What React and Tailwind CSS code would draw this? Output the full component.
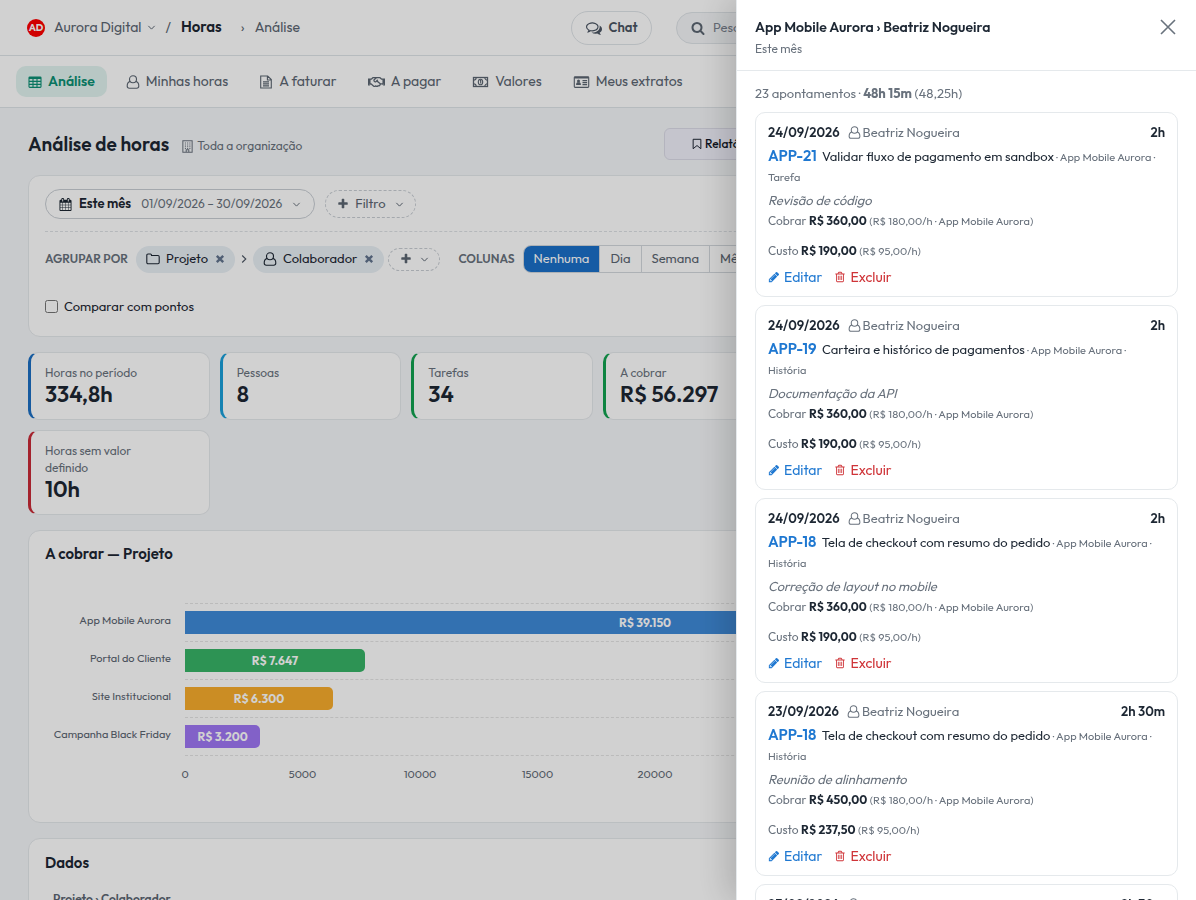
import React, { useState } from 'react';
import { FaRegHandshake } from 'react-icons/fa';

const SOLID_PATHS = {
  plus: 'M1600 736v192q0 40-28 68t-68 28h-416v416q0 40-28 68t-68 28h-192q-40 0-68-28t-28-68v-416h-416q-40 0-68-28t-28-68v-192q0-40 28-68t68-28h416v-416q0-40 28-68t68-28h192q40 0 68 28t28 68v416h416q40 0 68 28t28 68z',
  trash: 'M704 736v576q0 14-9 23t-23 9h-64q-14 0-23-9t-9-23v-576q0-14 9-23t23-9h64q14 0 23 9t9 23zm256 0v576q0 14-9 23t-23 9h-64q-14 0-23-9t-9-23v-576q0-14 9-23t23-9h64q14 0 23 9t9 23zm256 0v576q0 14-9 23t-23 9h-64q-14 0-23-9t-9-23v-576q0-14 9-23t23-9h64q14 0 23 9t9 23zm128 724v-948h-896v948q0 22 7 40.5t14.5 27 10.5 8.5h832q3 0 10.5-8.5t14.5-27 7-40.5zm-672-1076h448l-48-117q-7-9-17-11h-317q-10 2-17 11zm928 32v64q0 14-9 23t-23 9h-96v948q0 83-47 143.5t-113 60.5h-832q-66 0-113-58.5t-47-141.5v-952h-96q-14 0-23-9t-9-23v-64q0-14 9-23t23-9h309l70-167q15-37 54-63t79-26h320q40 0 79 26t54 63l70 167h309q14 0 23 9t9 23z',
  pencil: 'M491 1536l91-91-235-235-91 91v107h128v128h107zm523-928q0-22-22-22-10 0-17 7l-542 542q-7 7-7 17 0 22 22 22 10 0 17-7l542-542q7-7 7-17zm-54-192l416 416-832 832h-416v-416zm683 96q0 53-37 90l-166 166-416-416 166-165q36-38 90-38 53 0 91 38l235 234q37 39 37 91z',
  search: 'M1216 832q0-185-131.5-316.5t-316.5-131.5-316.5 131.5-131.5 316.5 131.5 316.5 316.5 131.5 316.5-131.5 131.5-316.5zm512 832q0 52-38 90t-90 38q-54 0-90-38l-343-342q-179 124-399 124-143 0-273.5-55.5t-225-150-150-225-55.5-273.5 55.5-273.5 150-225 225-150 273.5-55.5 273.5 55.5 225 150 150 225 55.5 273.5q0 220-124 399l343 343q37 37 37 90z',
  calendar: 'M192 1664h288v-288h-288v288zm352 0h320v-288h-320v288zm-352-352h288v-320h-288v320zm352 0h320v-320h-320v320zm-352-384h288v-288h-288v288zm736 736h320v-288h-320v288zm-384-736h320v-288h-320v288zm768 736h288v-288h-288v288zm-384-352h320v-320h-320v320zm-352-864v-288q0-13-9.5-22.5t-22.5-9.5h-64q-13 0-22.5 9.5t-9.5 22.5v288q0 13 9.5 22.5t22.5 9.5h64q13 0 22.5-9.5t9.5-22.5zm736 864h288v-320h-288v320zm-384-384h320v-288h-320v288zm384 0h288v-288h-288v288zm32-480v-288q0-13-9.5-22.5t-22.5-9.5h-64q-13 0-22.5 9.5t-9.5 22.5v288q0 13 9.5 22.5t22.5 9.5h64q13 0 22.5-9.5t9.5-22.5zm384-64v1280q0 52-38 90t-90 38h-1408q-52 0-90-38t-38-90v-1280q0-52 38-90t90-38h128v-96q0-66 47-113t113-47h64q66 0 113 47t47 113v96h384v-96q0-66 47-113t113-47h64q66 0 113 47t47 113v96h128q52 0 90 38t38 90z',
  chat: 'M704 384q-153 0-286 52t-211.5 141-78.5 191q0 82 53 158t149 132l97 56-35 84q34-20 62-39l44-31 53 10q78 14 153 14 153 0 286-52t211.5-141 78.5-191-78.5-191-211.5-141-286-52zm0-128q191 0 353.5 68.5t256.5 186.5 94 257-94 257-256.5 186.5-353.5 68.5q-86 0-176-16-124 88-278 128-36 9-86 16h-3q-11 0-20.5-8t-11.5-21q-1-3-1-6.5t.5-6.5 2-6l2.5-5 3.5-5.5 4-5 4.5-5 4-4.5q5-6 23-25t26-29.5 22.5-29 25-38.5 20.5-44q-124-72-195-177t-71-224q0-139 94-257t256.5-186.5 353.5-68.5zm822 1169q10 24 20.5 44t25 38.5 22.5 29 26 29.5 23 25q1 1 4 4.5t4.5 5 4 5 3.5 5.5l2.5 5 2 6 .5 6.5-1 6.5q-3 14-13 22t-22 7q-50-7-86-16-154-40-278-128-90 16-176 16-271 0-472-132 58 4 88 4 161 0 309-45t264-129q125-92 192-212t67-254q0-77-23-152 129 71 204 178t75 230q0 120-71 224.5t-195 176.5z',
};

const Solid = ({ name, className }) => (
  <svg className={`shrink-0 ${className}`} viewBox="0 0 1792 1792" fill="currentColor" aria-hidden="true">
    <path d={SOLID_PATHS[name]} />
  </svg>
);

const Line = ({ className, children, viewBox = '0 0 14 14' }) => (
  <svg className={`shrink-0 ${className}`} viewBox={viewBox} fill="none" stroke="currentColor" strokeWidth="1.1" aria-hidden="true">
    {children}
  </svg>
);

const UserIcon = ({ className }) => (
  <Line className={className}>
    <circle cx="7" cy="4.3" r="3.5" />
    <path d="M4.2 6.4C2.2 6.9 1.2 8.8 1.2 11.1c0 1.2.8 2.2 2.1 2.2h7.4c1.3 0 2.1-1 2.1-2.2 0-2.3-1-4.2-3-4.7" />
  </Line>
);

const TableIcon = ({ className }) => (
  <Line className={className}>
    <rect x="1" y="2" width="12" height="10.4" rx="0.8" />
    <path d="M1 3h12" strokeWidth="2" />
    <path d="M1 6.4h12M1 9.4h12M5 3v9.4M9 3v9.4" />
  </Line>
);

const FileIcon = ({ className }) => (
  <Line className={className}>
    <path d="M1.7 1h7l3.6 3.6V13H1.7zM8.4 1v4h3.9M4 6.9h6M4 8.9h6M4 10.9h6" />
  </Line>
);

const MoneyIcon = ({ className }) => (
  <Line className={className} viewBox="0 0 16 14">
    <rect x="1" y="2.5" width="14" height="9" strokeWidth="1.3" />
    <path d="M1 5.2A2.7 2.7 0 0 0 3.7 2.5M12.3 2.5A2.7 2.7 0 0 0 15 5.2M1 8.8a2.7 2.7 0 0 1 2.7 2.7M12.3 11.5A2.7 2.7 0 0 1 15 8.8" />
    <ellipse cx="8" cy="7" rx="2.2" ry="2.8" />
    <path d="M7.4 6 8.2 5.4v3.2" />
  </Line>
);

const IdCardIcon = ({ className }) => (
  <Line className={className} viewBox="0 0 16 14">
    <rect x="0.8" y="1.8" width="14.4" height="10.6" rx="0.8" />
    <path d="M1 2.7h14" strokeWidth="1.6" />
    <circle cx="5" cy="6" r="1.5" fill="currentColor" stroke="none" />
    <path d="M2.6 10c0-1.8.7-2.8 1.3-2.8h2.2c.6 0 1.3 1 1.3 2.8z" fill="currentColor" stroke="none" />
    <path d="M9 5.6h4.6M9 7.6h4.6M9 9.6h4.6" />
  </Line>
);

const BuildingIcon = ({ className }) => (
  <Line className={className}>
    <path d="M2 .9h10v12.2H2zM5.6 13v-2.4h2.8V13" />
    <path d="M4.2 3.3h5.9M4.2 5.3h5.9M4.2 7.3h5.9M4.2 9.2h5.9" strokeDasharray="1.1 1.3" />
  </Line>
);

const FolderIcon = ({ className }) => (
  <Line className={className}>
    <path d="M.8 3.2c0-.7.5-1.2 1.2-1.2h2.4c.7 0 1.1.5 1.1 1.1v.4H12c.7 0 1.2.5 1.2 1.2v5.8c0 .7-.5 1.2-1.2 1.2H2c-.7 0-1.2-.5-1.2-1.2z" />
  </Line>
);

const BookmarkIcon = ({ className }) => (
  <Line className={className}>
    <path d="M2.5 1.5h9v11L7 8.8l-4.5 3.7z" />
  </Line>
);

const ChevronIcon = ({ className }) => (
  <Line className={className} viewBox="0 0 10 10">
    <path d="M1.5 3.2 5 6.8l3.5-3.6" />
  </Line>
);

const RemoveIcon = () => (
  <Line className="size-[10px] text-slate-500" viewBox="0 0 10 10">
    <path d="m1.8 1.8 6.4 6.4M8.2 1.8 1.8 8.2" strokeWidth="2.4" />
  </Line>
);

const tabs = [
  { label: 'Análise', icon: TableIcon, active: true },
  { label: 'Minhas horas', icon: UserIcon },
  { label: 'A faturar', icon: FileIcon },
  { label: 'A pagar', icon: FaRegHandshake, wide: true },
  { label: 'Valores', icon: MoneyIcon, wide: true },
  { label: 'Meus extratos', icon: IdCardIcon, wide: true },
];

const kpis = [
  { label: 'Horas no período', value: '334,8h', border: 'border-l-[#1b6ec2]' },
  { label: 'Pessoas', value: '8', border: 'border-l-[#1a9fd9]' },
  { label: 'Tarefas', value: '34', border: 'border-l-[#12a150]' },
  { label: 'A cobrar', value: 'R$ 56.297', border: 'border-l-[#12a150]' },
  { label: 'Horas sem valor definido', value: '10h', border: 'border-l-[#c92a36]', newLine: true },
];

const AXIS_MAX = 40000;
const ticks = [0, 5000, 10000, 15000, 20000];
const bars = [
  { label: 'App Mobile Aurora', value: 39150, text: 'R$ 39.150', color: 'bg-[#3f8ad8]' },
  { label: 'Portal do Cliente', value: 7647, text: 'R$ 7.647', color: 'bg-[#37b467]' },
  { label: 'Site Institucional', value: 6300, text: 'R$ 6.300', color: 'bg-[#f8ac2c]' },
  { label: 'Campanha Black Friday', value: 3200, text: 'R$ 3.200', color: 'bg-[#9f77f5]' },
];

const apontamentos = [
  { data: '24/09/2026', horas: '2h', codigo: 'APP-21', titulo: 'Validar fluxo de pagamento em sandbox', tipo: 'Tarefa', obs: 'Revisão de código', cobrar: 'R$ 360,00', custo: 'R$ 190,00' },
  { data: '24/09/2026', horas: '2h', codigo: 'APP-19', titulo: 'Carteira e histórico de pagamentos', tipo: 'História', obs: 'Documentação da API', cobrar: 'R$ 360,00', custo: 'R$ 190,00' },
  { data: '24/09/2026', horas: '2h', codigo: 'APP-18', titulo: 'Tela de checkout com resumo do pedido', tipo: 'História', obs: 'Correção de layout no mobile', cobrar: 'R$ 360,00', custo: 'R$ 190,00' },
  { data: '23/09/2026', horas: '2h 30m', codigo: 'APP-18', titulo: 'Tela de checkout com resumo do pedido', tipo: 'História', obs: 'Reunião de alinhamento', cobrar: 'R$ 450,00', custo: 'R$ 237,50' },
  { data: '23/09/2026', horas: '2h 30m', codigo: 'APP-18', titulo: 'Tela de checkout com resumo do pedido', tipo: 'História', obs: 'Reunião de alinhamento', cobrar: 'R$ 450,00', custo: 'R$ 237,50' },
];

const Header = () => (
  <header className="flex h-14 shrink-0 items-center border-b border-[#dfe4e8] bg-white pl-[27px] pr-7 text-[14px] text-[#5c6672]">
    <button type="button" className="flex items-center gap-[9px]">
      <span className="flex size-[18px] items-center justify-center rounded-full bg-[#fe0000] text-[10px] font-bold text-white">AD</span>
      Aurora Digital
      <ChevronIcon className="-ml-[3px] size-[9px]" />
    </button>
    <span className="ml-[9px]">/</span>
    <a href="#horas" className="ml-[10px] text-[15px] font-semibold text-[#1d2733]">Horas</a>
    <span className="ml-[19px]">›</span>
    <span className="ml-[10px]">Análise</span>

    <button type="button" className="ml-auto flex h-[34px] w-[81px] items-center justify-center gap-[7px] rounded-full border border-[#dfe4e8] text-[13px] font-semibold text-[#4b5563]">
      <Solid name="chat" className="size-4" />
      Chat
    </button>
    <label className="ml-6 flex h-8 w-[492px] items-center gap-2 rounded-full border border-[#dfe4e8] bg-[#f4f6f8] pl-[14px] text-[13px]">
      <Solid name="search" className="size-[14px]" />
      <input type="search" placeholder="Pesquisar" aria-label="Pesquisar" className="w-full bg-transparent placeholder:text-[#7b8490] focus:outline-none" />
    </label>
  </header>
);

const Tabs = () => (
  <nav className="flex h-[52px] shrink-0 items-center gap-[7px] border-b border-[#dfe4e8] bg-white px-4 text-[14px] text-[#5c6672]">
    {tabs.map(({ label, icon: Icon, active, wide }) => (
      <a
        key={label}
        href="#aba"
        className={`flex h-[31px] items-center gap-[6px] rounded-[10px] px-3 ${active ? 'bg-[#e1f3ef] font-semibold text-[#0b8f74]' : ''}`}
      >
        <Icon className={wide ? 'h-[14px] w-[17px]' : 'size-[14px]'} />
        {label}
      </a>
    ))}
  </nav>
);

const Chip = ({ icon: Icon, label }) => (
  <span className="flex h-[27px] items-center gap-[6px] rounded-full bg-[#e8eff5] px-[10px] text-[13px] text-[#1d2733]">
    <Icon className="size-[14px]" />
    {label}
    <button type="button" aria-label={`Remover ${label}`} className="ml-[1px]">
      <RemoveIcon />
    </button>
  </span>
);

const Filters = () => {
  const [coluna, setColuna] = useState('Nenhuma');
  const [comparar, setComparar] = useState(false);

  return (
    <section className="rounded-xl border border-[#e5e9ec] bg-white px-4 pt-[13px] pb-[21px] text-[13px]">
      <div className="flex items-center gap-[10px] border-b border-dashed border-[#dde1e5] pb-3">
        <button type="button" className="flex h-[30px] items-center rounded-full border border-[#c9ced4] px-[13px] text-[#69727d]">
          <Solid name="calendar" className="size-[13px] text-[#1d2733]" />
          <span className="ml-[7px] font-semibold text-[#1d2733]">Este mês</span>
          <span className="ml-[10px] text-[12px]">01/09/2026 – 30/09/2026</span>
          <ChevronIcon className="ml-[10px] size-[9px]" />
        </button>
        <button type="button" className="flex h-7 items-center rounded-full border border-dashed border-[#c9ced4] px-[11px] text-[#5c6672]">
          <Solid name="plus" className="size-3" />
          <span className="ml-[6px]">Filtro</span>
          <ChevronIcon className="ml-[9px] size-[9px]" />
        </button>
      </div>

      <div className="mt-[13px] flex items-center gap-2">
        <span className="text-[12px] font-semibold text-[#69727d]">AGRUPAR POR</span>
        <div className="flex items-center gap-1">
          <Chip icon={FolderIcon} label="Projeto" />
          <ChevronIcon className="size-[10px] -rotate-90 text-[#4b5563]" />
          <Chip icon={UserIcon} label="Colaborador" />
          <button type="button" aria-label="Adicionar agrupamento" className="flex h-[23px] w-[52px] items-center justify-center gap-2 rounded-full border border-dashed border-[#c9ced4] text-[#5c6672]">
            <Solid name="plus" className="size-3" />
            <ChevronIcon className="size-[9px]" />
          </button>
        </div>
        <span className="ml-[10px] text-[12px] font-semibold text-[#69727d]">COLUNAS</span>
        <div className="flex h-7 divide-x divide-[#d3d8dd] overflow-hidden rounded-lg border border-[#d3d8dd]">
          {['Nenhuma', 'Dia', 'Semana', 'Mês'].map(item => (
            <button
              key={item}
              type="button"
              onClick={() => setColuna(item)}
              className={`px-[10px] ${coluna === item ? 'bg-[#1a6fc8] text-white' : 'text-[#5c6672]'}`}
            >
              {item}
            </button>
          ))}
        </div>
      </div>

      <label className="mt-6 flex items-center gap-[6px] leading-[18px] text-[#1d2733]">
        <input
          type="checkbox"
          checked={comparar}
          onChange={e => setComparar(e.target.checked)}
          className="size-[13px]"
        />
        Comparar com pontos
      </label>
    </section>
  );
};

const Chart = () => (
  <section className="rounded-xl border border-[#e5e9ec] bg-white px-4 pt-[13px] pb-[39px]">
    <h2 className="text-[15px] leading-5 font-semibold text-[#1d2733]">A cobrar — Projeto</h2>
    <div className="mt-[39px] flex gap-[14px] pr-[26px]">
      <div className="w-[126px] shrink-0 text-right text-[11px] text-[#5c6672]">
        {bars.map(bar => (
          <div key={bar.label} className="h-[38px] leading-[34px]">{bar.label}</div>
        ))}
      </div>
      <div className="min-w-0 flex-1">
        <div className="border-b border-dashed border-[#e4e4e4]">
          {bars.map(bar => (
            <div key={bar.label} className="flex h-[38px] items-center border-t border-dashed border-[#e4e4e4]">
              <div
                className={`flex h-[23px] items-center justify-center rounded-r-[5px] text-[12px] font-bold text-white ${bar.color}`}
                style={{ width: `${(bar.value / AXIS_MAX) * 100}%` }}
              >
                {bar.text}
              </div>
            </div>
          ))}
        </div>
        <div className="mt-[9px] flex text-[11px] leading-[18px] text-[#5c6672]">
          {ticks.map(tick => (
            <div key={tick} className="flex w-[12.5%]">
              <span className="flex w-0 justify-center">{tick}</span>
            </div>
          ))}
        </div>
      </div>
    </div>
  </section>
);

const Entry = ({ item }) => (
  <article className="rounded-[10px] border border-[#e5e9ec] px-3 py-[10px] text-[#69727d]">
    <div className="flex items-center text-[13px] leading-[18px]">
      <strong className="font-semibold text-[#1d2733]">{item.data}</strong>
      <UserIcon className="mr-[2px] ml-2 size-[13px]" />
      <span>Beatriz Nogueira</span>
      <strong className="ml-auto font-semibold text-[#1d2733]">{item.horas}</strong>
    </div>
    <p className="mt-[5px] text-[11px] leading-5">
      <a href="#tarefa" className="mr-[3px] text-[15px] leading-5 font-semibold text-[#1f78d1]">{item.codigo}</a>{' '}
      <span className="text-[13px] leading-5 text-[#1d2733]">{item.titulo}</span> · App Mobile Aurora · {item.tipo}
    </p>
    <p className="mt-1 text-[13px] leading-[18px] italic">{item.obs}</p>
    <p className="text-[12px] leading-[23px]">
      Cobrar <strong className="font-bold text-[#1d2733]">{item.cobrar}</strong>{' '}
      <span className="text-[11px]">(R$ 180,00/h · App Mobile Aurora)</span>
    </p>
    <p className="mt-[9px] text-[12px] leading-[18px]">
      Custo <strong className="font-bold text-[#1d2733]">{item.custo}</strong>{' '}
      <span className="text-[11px]">(R$ 95,00/h)</span>
    </p>
    <div className="mt-2 flex gap-3 text-[14px] leading-[18px]">
      <button type="button" className="flex items-center gap-1 text-[#1f78d1]">
        <Solid name="pencil" className="size-3" />
        Editar
      </button>
      <button type="button" className="flex items-center gap-1 text-[#cf3438]">
        <Solid name="trash" className="size-3" />
        Excluir
      </button>
    </div>
  </article>
);

const Drawer = () => (
  <aside className="fixed inset-y-0 right-0 flex w-[460px] max-w-full flex-col border-l border-[#e5e9ec] bg-white shadow-[-8px_0_32px_rgba(0,0,0,0.18)]">
    <div className="flex shrink-0 items-start justify-between border-b border-[#e5e9ec] px-[18px] pt-4 pb-3">
      <div>
        <h2 className="text-[14px] leading-[22px] font-semibold text-[#1d2733]">App Mobile Aurora › Beatriz Nogueira</h2>
        <p className="mt-[2px] text-[12px] leading-[18px] text-[#69727d]">Este mês</p>
      </div>
      <button type="button" aria-label="Fechar" className="mt-[2px] text-[#69727d]">
        <svg className="size-[18px]" viewBox="0 0 18 18" fill="none" stroke="currentColor" strokeWidth="1.6">
          <path d="M1 2l14 14M15 2 1 16" />
        </svg>
      </button>
    </div>
    <div className="min-h-0 flex-1 overflow-y-auto px-[18px] pt-3 [scrollbar-width:none]">
      <p className="text-[13px] leading-5 text-[#69727d]">
        23 apontamentos · <strong className="font-bold">48h 15m</strong> (48,25h)
      </p>
      <div className="mt-[9px] flex flex-col gap-2 pb-4">
        {apontamentos.map((item, index) => (
          <Entry key={index} item={item} />
        ))}
      </div>
    </div>
  </aside>
);

const App = () => {
  return (
    <div className="h-screen overflow-hidden bg-[#f5f7f9] font-['Outfit','Lato',sans-serif]">
      <Header />
      <Tabs />
      <main className="px-7 pt-5">
        <div className="flex items-center">
          <h1 className="text-[19px] font-semibold text-[#1d2733]">Análise de horas</h1>
          <span className="ml-3 flex items-center gap-[3px] pt-1 text-[12px] text-[#69727d]">
            <BuildingIcon className="size-[13px]" />
            Toda a organização
          </span>
          <button type="button" className="ml-auto flex h-8 w-[504px] items-center gap-[2px] rounded-md border border-[#dcdce8] bg-[#f1f1fb] px-[26px] text-[12px] font-medium text-[#111827]">
            <BookmarkIcon className="size-[12px]" />
            Relatórios
          </button>
        </div>

        <div className="mt-[15px] flex flex-col gap-[15px]">
          <Filters />
          <div className="grid grid-cols-6 gap-[10px]">
            {kpis.map(kpi => (
              <div
                key={kpi.label}
                className={`rounded-[10px] border border-l-[3px] border-[#e5e9ec] bg-white px-[14px] py-[11px] ${kpi.border} ${kpi.newLine ? 'col-start-1' : ''}`}
              >
                <div className="pr-8 text-[12px] leading-[17px] text-[#69727d]">{kpi.label}</div>
                <div className="text-[22px] leading-[27px] font-semibold text-[#1d2733]">{kpi.value}</div>
              </div>
            ))}
          </div>
          <Chart />
          <section className="rounded-xl border border-[#e5e9ec] bg-white px-4 pt-[14px] pb-4">
            <h2 className="text-[15px] leading-5 font-semibold text-[#1d2733]">Dados</h2>
            <table className="mt-[14px] w-full text-left text-[12px] text-[#5c6672]">
              <thead>
                <tr>
                  <th className="px-2 py-[3px] font-semibold">Projeto › Colaborador</th>
                </tr>
              </thead>
            </table>
          </section>
        </div>
      </main>

      <div className="fixed inset-0 bg-black/18" />
      <Drawer />
    </div>
  );
};

export default App;
